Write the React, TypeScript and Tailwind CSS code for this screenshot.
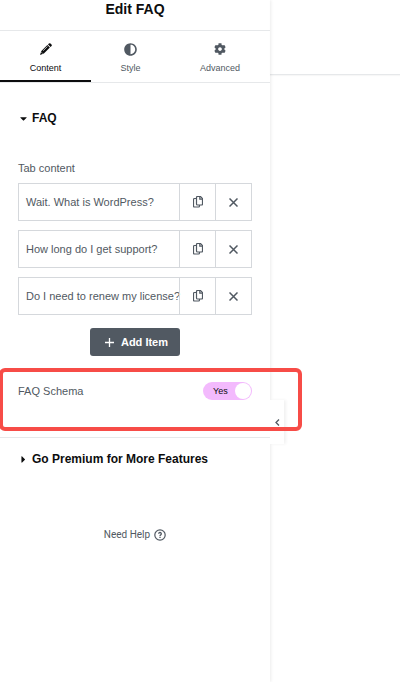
import { useState } from "react";
import { FaAdjust, FaCaretDown, FaCaretRight, FaCog } from "react-icons/fa";

const tabs = [
  { name: "Content", icon: <PencilIcon /> },
  { name: "Style", icon: <FaAdjust className="size-[13px]" /> },
  { name: "Advanced", icon: <FaCog className="size-3" /> },
];

const initialItems = [
  "Wait. What is WordPress?",
  "How long do I get support?",
  "Do I need to renew my license?",
];

function PencilIcon() {
  return (
    <svg width="12" height="12" viewBox="0 0 12 12" fill="currentColor">
      <path d="M8.900.500a1.200 1.200 0 0 1 1.600 0l1 1a1.200 1.200 0 0 1 0 1.600l-.9.9-2.600-2.600Z" />
      <path d="M7.400 2.100l2.500 2.500-6 6L0 12l1.400-3.900Z" />
      <path d="M3.200 7.700l4.300-4.300M1.500 9.300l1.200 1.200" fill="none" stroke="white" strokeWidth=".7" />
    </svg>
  );
}

function CopyIcon() {
  return (
    <svg
      width="10"
      height="12"
      viewBox="0 0 10 12"
      fill="none"
      stroke="currentColor"
      strokeWidth="1.200"
    >
      <path d="M3.500 1.500a1 1 0 0 1 1-1h3l2 2V8a1 1 0 0 1-1 1h-4a1 1 0 0 1-1-1Z" />
      <path d="M6.800.5V3.200h2.700" />
      <path d="M3.500 2.500H1.500a1 1 0 0 0-1 1v6.500a1 1 0 0 0 1 1h4a1 1 0 0 0 1-1V9" />
    </svg>
  );
}

function CloseIcon() {
  return (
    <svg width="9" height="9" viewBox="0 0 9 9" fill="none" stroke="currentColor" strokeWidth="1.500">
      <path d="M.5.5l8 8M8.500.5l-8 8" />
    </svg>
  );
}

function HelpIcon() {
  return (
    <svg width="12" height="12" viewBox="0 0 12 12" fill="none" stroke="currentColor">
      <circle cx="6" cy="6" r="5.200" strokeWidth="1.200" />
      <path
        d="M4.700 4.800a1.300 1.300 0 1 1 2 1.100c-.5.300-.7.500-.7 1M6 7.800v1.200"
        strokeWidth="1.300"
      />
    </svg>
  );
}

function App() {
  const [activeTab, setActiveTab] = useState("Content");
  const [items, setItems] = useState(initialItems);
  const [schema, setSchema] = useState(true);

  return (
    <div className="flex min-h-screen bg-white font-['Liberation_Sans',Arial,sans-serif] text-[#515962]">
      <aside className="relative w-[270px] shrink-0 shadow-[1px_0_3px_rgba(0,0,0,0.08)]">
        <header className="flex h-[31px] justify-center border-b border-[#e6e8ea]">
          <h1 className="text-[14px] leading-[18px] font-bold text-[#0c0d0e]">Edit FAQ</h1>
        </header>

        <nav className="grid grid-cols-[91px_79px_1fr] border-b border-[#e6e8ea]">
          {tabs.map((tab) => (
            <button
              key={tab.name}
              onClick={() => setActiveTab(tab.name)}
              className={`flex h-[51px] flex-col items-center border-b-2 pt-[11px] text-[9px] leading-3 ${
                activeTab === tab.name
                  ? "border-[#0c0d0e] text-[#0c0d0e]"
                  : "border-transparent"
              }`}
            >
              <span className="flex h-[14px] items-center">{tab.icon}</span>
              <span className="mt-[6px]">{tab.name}</span>
            </button>
          ))}
        </nav>

        <section className="border-b border-[#e6e8ea] pb-[37px]">
          <h2 className="px-[18px] pt-[27px]">
            <button className="flex items-center gap-[3px] text-[12px] leading-4 font-bold text-[#0c0d0e]">
              <FaCaretDown className="size-[11px]" />
              FAQ
            </button>
          </h2>

          <div className="px-[18px] pt-[34px]">
            <h3 className="text-[11px] leading-4">Tab content</h3>
            <ul className="mt-[7px] flex flex-col gap-[9px]">
              {items.map((item) => (
                <li key={item} className="flex h-[38px] border border-[#d5d8dc]">
                  <button className="min-w-0 flex-1 pl-[7px] text-left text-[11px] whitespace-nowrap">
                    {item}
                  </button>
                  <button
                    aria-label="Duplicate"
                    className="flex w-9 items-center justify-center border-l border-[#d5d8dc]"
                  >
                    <CopyIcon />
                  </button>
                  <button
                    aria-label="Remove"
                    onClick={() => setItems(items.filter((i) => i !== item))}
                    className="flex w-9 items-center justify-center border-l border-[#d5d8dc]"
                  >
                    <CloseIcon />
                  </button>
                </li>
              ))}
            </ul>
            <button className="mx-auto mt-[13px] flex h-7 w-[90px] items-center justify-end gap-[7px] rounded-[3px] bg-[#515962] pr-3 text-[11px] font-bold text-white">
              <svg width="9" height="9" viewBox="0 0 9 9" stroke="currentColor" strokeWidth="1.300">
                <path d="M4.500 0v9M0 4.500h9" />
              </svg>
              Add Item
            </button>
          </div>

          <div className="relative mt-[26px] flex items-center justify-between px-[18px]">
            <label htmlFor="schema" className="text-[11px]">
              FAQ Schema
            </label>
            <span className="relative flex">
              <input
                id="schema"
                type="checkbox"
                role="switch"
                checked={schema}
                onChange={(e) => setSchema(e.target.checked)}
                className="peer h-[18px] w-[49px] appearance-none rounded-full bg-[#d5d8dc] checked:bg-[#f3bafd]"
              />
              <span className="pointer-events-none absolute top-[3px] left-[10px] text-[9px] leading-3 text-[#0c0d0e]">
                {schema ? "Yes" : "No"}
              </span>
              <span className="pointer-events-none absolute top-px left-px size-4 rounded-full bg-white peer-checked:left-8" />
            </span>
            <div className="pointer-events-none absolute -top-[14px] -right-[32px] -left-px z-20 h-[63px] rounded-[6px] border-4 border-[#f74c47]" />
          </div>
        </section>

        <section className="px-[18px] pt-[13px]">
          <h2>
            <button className="flex items-center gap-[3px] text-[12px] leading-4 font-bold text-[#0c0d0e]">
              <FaCaretRight className="size-[11px]" />
              Go Premium for More Features
            </button>
          </h2>
        </section>

        <a
          href="#help"
          className="mt-[60px] flex items-center justify-center gap-1 font-[Roboto,sans-serif] text-[10px] leading-4"
        >
          Need Help
          <HelpIcon />
        </a>

        <button
          aria-label="Hide panel"
          className="absolute top-[400px] left-full z-10 flex h-11 w-[14px] items-center justify-center bg-white shadow-[2px_0_3px_rgba(0,0,0,0.06)]"
        >
          <svg width="5" height="7" viewBox="0 0 5 7" fill="none" stroke="currentColor" strokeWidth="1.300">
            <path d="M4 .5l-3 3 3 3" />
          </svg>
        </button>
      </aside>

      <main className="flex-1">
        <div className="h-[75px] border-b border-[#e6e8ea] shadow-[0_1px_1px_rgba(0,0,0,0.03)]" />
      </main>
    </div>
  );
}

export default App;
